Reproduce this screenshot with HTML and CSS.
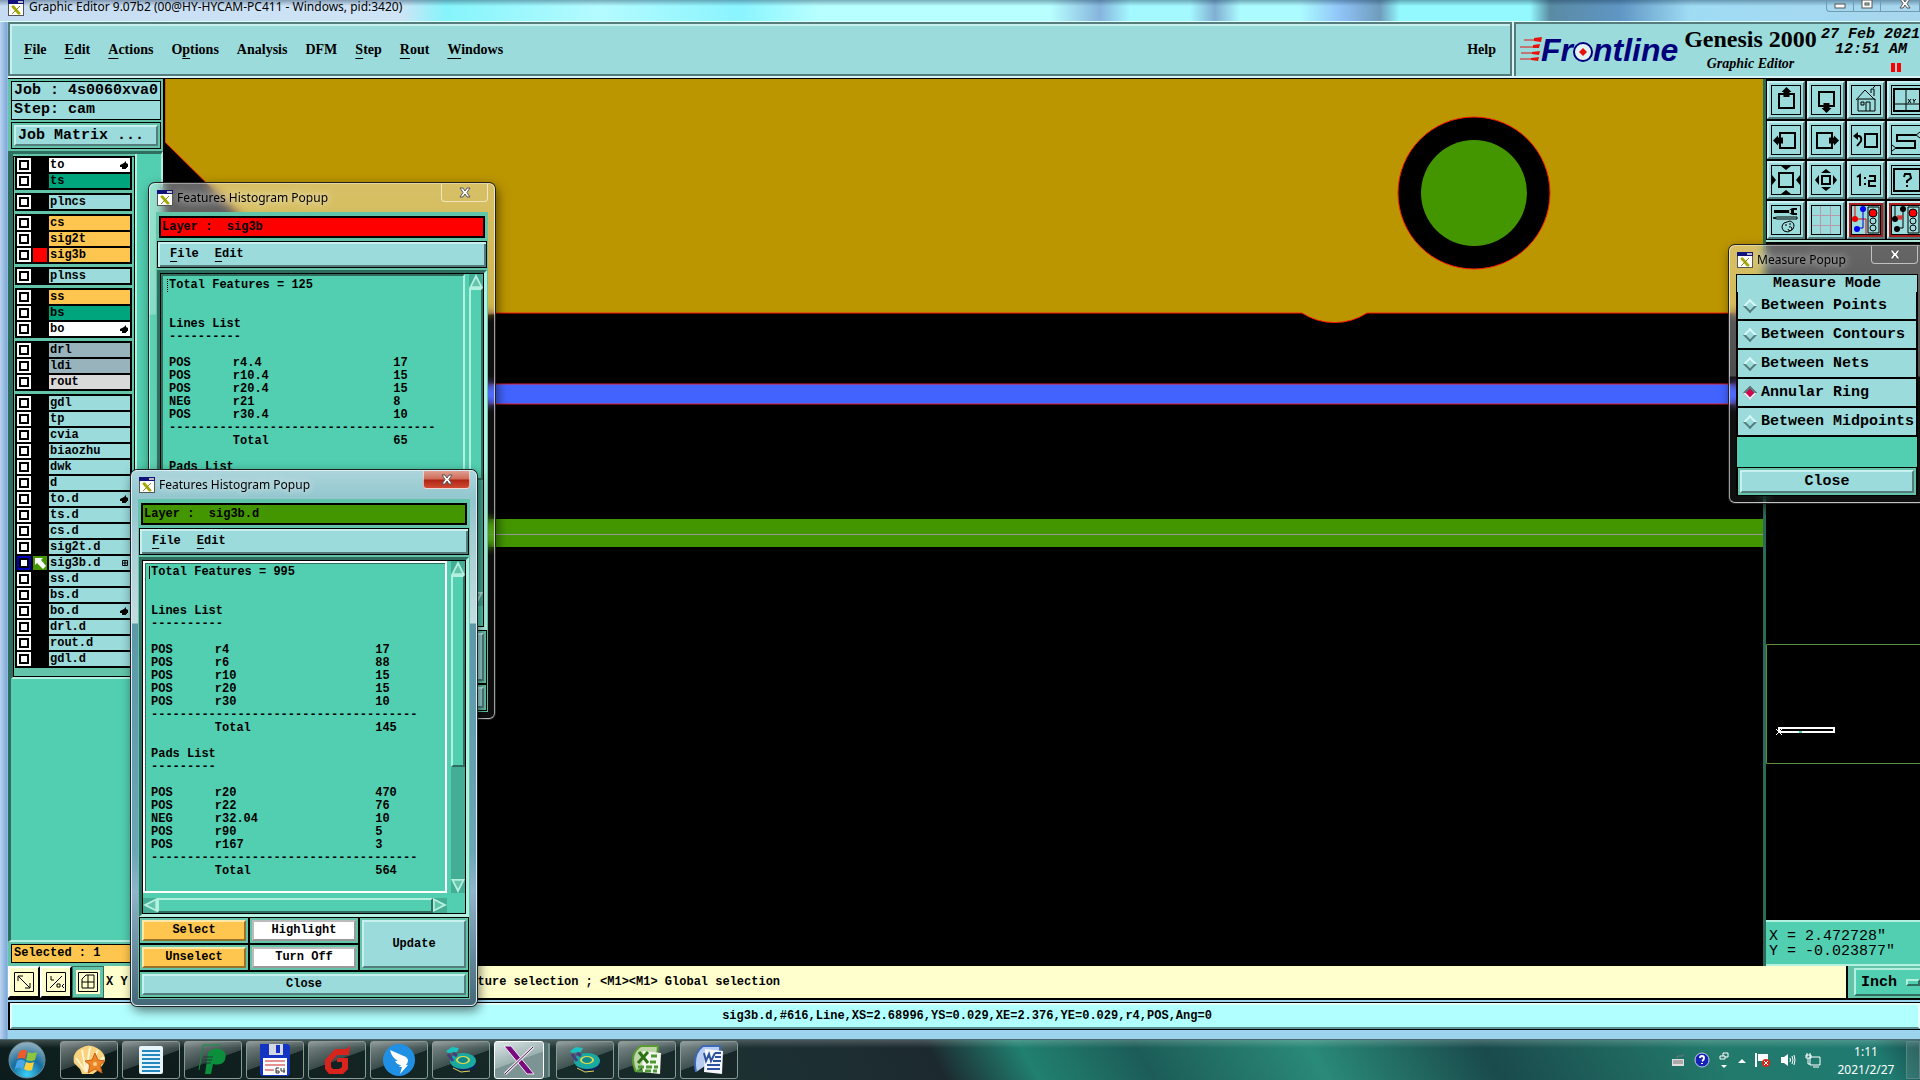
FILE: index.html
```html
<!DOCTYPE html>
<html lang="en">
<head>
  <meta charset="UTF-8" />
  <meta name="viewport" content="width=device-width, initial-scale=1.0"/>
  <title>Graphic Editor</title>
  <link rel="stylesheet" href="styles.css">
</head>
<body>
  <!-- shared icons -->
  <svg class="defs" width="0" height="0">
    <symbol id="app-icon" viewBox="0 0 16 16">
      <rect width="16" height="16" fill="#555"/><rect x="1" y="4" width="14" height="11" fill="#fff"/>
      <rect width="16" height="4" fill="#12127c"/><rect x="10" y="1" width="5" height="2" fill="#bbb"/>
      <path d="M4 6l7 8M5 6l7 8" stroke="#a5a800" stroke-width="2"/><path d="M12 6l-8 8" stroke="#8a8c10" stroke-width="1"/>
    </symbol>
    <symbol id="hand" viewBox="0 0 8 8"><path d="M0 4l4-2 2-2v2l2 1v3H7v1H6v1H2V6H0z"/></symbol>
    <symbol id="cross" viewBox="0 0 12 11">
      <path d="M1 1h3l2 3 2-3h3l-3 4.500 3 4.500h-3l-2-3-2 3h-3l3-4.500z" fill="#fff" stroke="#555" stroke-width="1"/>
    </symbol>
    <symbol id="disc" viewBox="0 0 32 32">
      <ellipse cx="19" cy="20" rx="12" ry="8" fill="#125" /><ellipse cx="18" cy="17" rx="13" ry="8" fill="#19a9a0"/>
      <ellipse cx="18" cy="16" rx="7" ry="4" fill="#e2d94a"/><ellipse cx="18" cy="16" rx="5" ry="3" fill="#0e8a8c"/>
      <path d="M1 7l6-4 7 1-2 4-9 1z" fill="#1cc2c0"/><path d="M3 10l5 7M8 9l4 3" stroke="#443f83" stroke-width="3"/>
      <path d="M8 24l8 4 9-1" stroke="#e2d94a" stroke-width="1" fill="none"/>
    </symbol>
  </svg>

  <div class="editor">
    <header class="titlebar">
      <svg class="app-icon"><use href="#app-icon"/></svg>
      <span class="title">Graphic Editor 9.07b2 (00@HY-HYCAM-PC411 - Windows, pid:3420)</span>
      <div class="win-buttons">
        <button type="button" aria-label="Minimize"><svg width="12" height="11"><rect x="1" y="4" width="10" height="4" fill="#fff" stroke="#555"/></svg></button>
        <button type="button" aria-label="Restore"><svg width="12" height="11"><rect x="1" y="0" width="10" height="8" fill="#fff" stroke="#555"/><rect x="4" y="3" width="4" height="2" fill="#9dc" stroke="#555"/></svg></button>
        <button type="button" class="wide" aria-label="Close"><svg width="12" height="11" viewBox="0 2 12 11"><use href="#cross" width="12" height="11"/></svg></button>
      </div>
    </header>

    <div class="topbar">
      <nav class="menubar">
        <button type="button"><u>F</u>ile</button>
        <button type="button"><u>E</u>dit</button>
        <button type="button"><u>A</u>ctions</button>
        <button type="button">O<u>p</u>tions</button>
        <button type="button">Analysis</button>
        <button type="button">DFM</button>
        <button type="button"><u>S</u>tep</button>
        <button type="button"><u>R</u>out</button>
        <button type="button"><u>W</u>indows</button>
        <button type="button" class="help">Help</button>
      </nav>
      <div class="brand">
        <svg class="logo" width="162" height="46" viewBox="0 -6 162 46">
          <g fill="#e8120c" stroke="#e8120c">
            <path d="M4 5h12M0 12h14M1 18h13M0 24h12" stroke-width="1"/>
            <path d="M14 3l8-1-1 5-7-1zM13 10l7-1-1 4-6 0zM12 17l8-1-1 4-7-1zM11 23l8-1-1 4-7-1z" stroke="none"/>
          </g>
          <text x="21" y="26">Fr</text>
          <text x="73" y="26">ntline</text>
          <circle cx="63" cy="17" r="9" fill="#e4f4f4" stroke="#00007c" stroke-width="2"/>
          <path d="M63 13l4 4-4 4-4-4z" fill="#e8120c"/>
        </svg>
        <div class="product">
          <h1>Genesis 2000</h1>
          <p>Graphic Editor</p>
        </div>
        <div class="clock">
          <p>27 Feb 2021</p>
          <p>12:51 AM</p>
          <span class="pause"></span>
        </div>
      </div>
    </div>

    <div class="workspace">
      <aside class="sidebar">
        <div class="job">
          <p>Job : 4s0060xva0</p>
          <p>Step: cam</p>
        </div>
        <div class="matrix"><button type="button">Job Matrix ...</button></div>
        <div class="layers">
          <div class="layer-list">
            <div class="group">
              <label class="white"><input type="checkbox"><i></i><span>to<svg><use href="#hand"/></svg></span></label>
              <label class="green"><input type="checkbox"><i></i><span>ts</span></label>
            </div>
            <div class="group">
              <label><input type="checkbox"><i></i><span>plncs</span></label>
            </div>
            <div class="group">
              <label class="orange"><input type="checkbox"><i></i><span>cs</span></label>
              <label class="orange"><input type="checkbox"><i></i><span>sig2t</span></label>
              <label class="orange"><input type="checkbox"><i class="red"></i><span>sig3b</span></label>
            </div>
            <div class="group">
              <label><input type="checkbox"><i></i><span>plnss</span></label>
            </div>
            <div class="group">
              <label class="orange"><input type="checkbox"><i></i><span>ss</span></label>
              <label class="green"><input type="checkbox"><i></i><span>bs</span></label>
              <label class="white"><input type="checkbox"><i></i><span>bo<svg><use href="#hand"/></svg></span></label>
            </div>
            <div class="group">
              <label class="slate"><input type="checkbox"><i></i><span>drl</span></label>
              <label class="slate"><input type="checkbox"><i></i><span>ldi</span></label>
              <label class="grey"><input type="checkbox"><i></i><span>rout</span></label>
            </div>
            <div class="group">
              <label><input type="checkbox"><i></i><span>gdl</span></label>
              <label><input type="checkbox"><i></i><span>tp</span></label>
              <label><input type="checkbox"><i></i><span>cvia</span></label>
              <label><input type="checkbox"><i></i><span>biaozhu</span></label>
              <label><input type="checkbox"><i></i><span>dwk</span></label>
              <label><input type="checkbox"><i></i><span>d</span></label>
              <label><input type="checkbox"><i></i><span>to.d<svg><use href="#hand"/></svg></span></label>
              <label><input type="checkbox"><i></i><span>ts.d</span></label>
              <label><input type="checkbox"><i></i><span>cs.d</span></label>
              <label><input type="checkbox"><i></i><span>sig2t.d</span></label>
              <label><input type="checkbox" checked><i class="work"><svg viewBox="0 0 14 14"><path d="M2 2h8l-2 2 5 6-3 3-6-6-2 2z" fill="#fff"/></svg></i><span>sig3b.d<svg viewBox="0 0 8 8"><path d="M2.500 1.500h5v5h-5zM2 4h6M5 1.500v5" fill="none" stroke="#000"/></svg></span></label>
              <label><input type="checkbox"><i></i><span>ss.d</span></label>
              <label><input type="checkbox"><i></i><span>bs.d</span></label>
              <label><input type="checkbox"><i></i><span>bo.d<svg><use href="#hand"/></svg></span></label>
              <label><input type="checkbox"><i></i><span>drl.d</span></label>
              <label><input type="checkbox"><i></i><span>rout.d</span></label>
              <label><input type="checkbox"><i></i><span>gdl.d</span></label>
            </div>
          </div>
        </div>
        <p class="selected">Selected : 1</p>
      </aside>

      <main class="canvas">
        <svg width="100%" height="100%" viewBox="0 0 1598 887" preserveAspectRatio="xMinYMin slice">
          <path d="M0 -2H1600V234H1202a60 60 0 0 1 -65 0H173L0 63z" fill="#bc9600" stroke="#ff1a00"/>
          <rect x="-2" y="305" width="1602" height="20" fill="#4363ff" stroke="#e0202c"/>
          <rect y="440" width="1600" height="28" fill="#439600"/>
          <path d="M0 455.500h1600" stroke="#999"/>
          <circle cx="1309" cy="114" r="76" fill="#000" stroke="#ff1a00"/>
          <circle cx="1309" cy="114" r="53" fill="#439600"/>
        </svg>
      </main>

      <aside class="tools">
        <div class="toolbox">
          <button type="button" aria-label="Pan up"><svg viewBox="0 0 30 30"><path d="M8 9h15v14H8z" class="thick"/><path d="M15.500 2l5 5h-2v5h-6V7h-2z"/></svg></button>
          <button type="button" aria-label="Pan down"><svg viewBox="0 0 30 30"><path d="M8 7h15v14H8z" class="thick"/><path d="M15.500 28l5-5h-2v-5h-6v5h-2z"/></svg></button>
          <button type="button" aria-label="Home"><svg viewBox="0 0 30 30"><path d="M5 15L14 5l10 10M7 14v12h17V14zM10 17h3v3h-3zM15 26v-9h4v9M20 8V4h3v7M22 3l2-2" class="thin"/></svg></button>
          <button type="button" aria-label="Overview"><svg viewBox="0 0 30 30"><path d="M3 4h26v22H3z" class="thick"/><path d="M15 4v22M3 19h26M17 14l3 4M20 14l-3 4M22 14l1 2 2-2M23 16v2" class="thin"/></svg></button>
          <button type="button" aria-label="Pan left"><svg viewBox="0 0 30 30"><path d="M9 8h15v15H9z" class="thick"/><path d="M2 15.500l5-5v2h5v6H7v2z"/></svg></button>
          <button type="button" aria-label="Pan right"><svg viewBox="0 0 30 30"><path d="M6 8h15v15H6z" class="thick"/><path d="M28 15.500l-5-5v2h-5v6h5v2z"/></svg></button>
          <button type="button" aria-label="Previous view"><svg viewBox="0 0 30 30"><path d="M14 9h12v13H14zM4 11h4q3 1 2 5l-4 5" class="thick"/><path d="M2 11l5-4v8z"/></svg></button>
          <button type="button" aria-label="Serpentine"><svg viewBox="0 0 30 30"><path d="M25 10H6v6h18v7H5" class="thick"/><path d="M25 10l4-3M25 10l4 3M5 23l-4-3M5 23l-4 3" class="thin"/></svg></button>
          <button type="button" aria-label="Zoom in"><svg viewBox="0 0 30 30"><path d="M8 8h14v14H8z" class="thick"/><path d="M10 1h10l-5 4zM10 29h10l-5-4zM1 10v10l4-5zM29 10v10l-4-5z"/></svg></button>
          <button type="button" aria-label="Zoom out"><svg viewBox="0 0 30 30"><path d="M11 11h8v8h-8z" class="thick"/><path d="M10 8h10l-5-4zM10 22h10l-5 4zM8 10v10l-4-5zM22 10v10l4-5z"/></svg></button>
          <button type="button" aria-label="Scale 1:2"><svg viewBox="0 0 30 30"><path d="M6 12l3-2v11M14 12v2M14 18v2M18 11h6v5h-6v5h7" class="thick"/></svg></button>
          <button type="button" aria-label="Query"><svg viewBox="0 0 30 30"><path d="M3 4h26v22H3zM13 12l1-3h5l1 4-4 3v2M16 20v2" class="thick"/></svg></button>
          <button type="button" aria-label="Setup"><svg viewBox="0 0 30 30"><path d="M3 5h17v3H3zM26 3h-4q-4 1-4 3.500t4 3.500h4V8h-3V5h3z"/><path d="M2 13l4-1h20v2H6zM13 18l6-2q6 2 3 8l-5 3-4-1q-4-4 0-8M14 20h2M18 19h2M17 24a2 2 0 1 0 1-2" class="thin"/></svg></button>
          <button type="button" aria-label="Grid"><svg viewBox="0 0 30 30"><path d="M9.500 0v30M19.500 0v30M0 10.500h30M0 20.500h30" fill="none" stroke="#b799a8"/></svg></button>
          <button type="button" class="alert" aria-label="Nets check"><svg viewBox="0 0 30 30"><path d="M4 0v14h11v16" stroke="#e00" fill="none"/><circle cx="4" cy="14" r="3" fill="#e00"/><path d="M12 4v19H6" stroke="#00c" fill="none"/><circle cx="12" cy="4" r="3" fill="#00e"/><circle cx="6" cy="24" r="3" fill="#00e"/><path d="M17 2h11v26H17z" class="thin"/><circle cx="22" cy="8" r="4" fill="#f00" stroke="#000"/><circle cx="22" cy="16" r="3" class="thin"/><circle cx="22" cy="23" r="3" class="thin"/></svg></button>
          <button type="button" class="alert" aria-label="Spacing check"><svg viewBox="0 0 30 30"><path d="M4 0v14M12 4v19H6" class="thin"/><circle cx="4" cy="14" r="3"/><circle cx="12" cy="4" r="3"/><circle cx="6" cy="24" r="3"/><path d="M7 10v4h4v-4M9 10v4M7 12h4" stroke="#e00" fill="none"/><path d="M17 2h11v26H17z" class="thin"/><circle cx="22" cy="8" r="4" fill="#f00" stroke="#000"/><circle cx="22" cy="16" r="3" class="thin"/><circle cx="22" cy="23" r="3" class="thin"/></svg></button>
        </div>
        <div class="overview">
          <svg width="154" height="120" viewBox="0 0 154 120">
            <path d="M160 .5H.5v119H160" fill="none" stroke="#5c8f3c"/>
            <path d="M13 84h55v4H13z" fill="none" stroke="#fff" stroke-width="2"/>
            <path d="M10 85l6 6M16 85l-6 6" stroke="#fff"/><rect x="33" y="87" width="3" height="2" fill="#52cfb0"/>
          </svg>
        </div>
        <div class="coords">
          <p>X = 2.472728"</p>
          <p>Y = -0.023877"</p>
        </div>
      </aside>
    </div>

    <div class="command">
      <button type="button" class="mode" aria-label="Snap off"><svg viewBox="0 0 20 20"><path d="M.5 .5h19v19H.5zM4 4l12 12M4 9V4h5M16 11v5h-5" class="thin"/></svg></button>
      <button type="button" class="mode" aria-label="Angle"><svg viewBox="0 0 20 20"><path d="M.5 .5h19v19H.5zM4 16L16 4M5 4v4h3M11 12h3v3h-3zM18 12l-2 2 2 2" class="thin"/></svg></button>
      <button type="button" class="mode on" aria-label="Grid snap"><svg viewBox="0 0 20 20"><path d="M.5 .5h19v19H.5zM8 3h8v13H4V7zM10 3v13M4 10h12" class="thin"/></svg></button>
      <div class="prompt"><span class="xy">X Y</span><span>Feature selection ; &lt;M1&gt;&lt;M1&gt; Global selection</span></div>
      <div class="units"><button type="button">Inch <i></i></button></div>
    </div>
    <div class="status"><p>sig3b.d,#616,Line,XS=2.68996,YS=0.029,XE=2.376,YE=0.029,r4,POS,Ang=0</p></div>
  </div>

  <section class="popup histogram first">
    <header>
      <svg class="app-icon"><use href="#app-icon"/></svg><h2>Features Histogram Popup</h2>
      <button type="button" class="close" aria-label="Close"><svg width="12" height="11"><use href="#cross"/></svg></button>
    </header>
    <div class="body">
      <p class="layer red">Layer :&nbsp; sig3b</p>
      <nav class="submenu"><button type="button"><u>F</u>ile</button><button type="button"><u>E</u>dit</button></nav>
      <div class="pane">
        <div class="report">
          <p class="caret">Total Features = 125</p>
          <h3>Lines List</h3>
          <p>----------</p>
          <table>
            <tr><td>POS</td><td>r4.4</td><td>17</td></tr>
            <tr><td>POS</td><td>r10.4</td><td>15</td></tr>
            <tr><td>POS</td><td>r20.4</td><td>15</td></tr>
            <tr><td>NEG</td><td>r21</td><td>8</td></tr>
            <tr><td>POS</td><td>r30.4</td><td>10</td></tr>
            <tr><td colspan="3">-------------------------------------</td></tr>
            <tr><td></td><td>Total</td><td>65</td></tr>
          </table>
          <h4>Pads List</h4>
        </div>
        <div class="vscroll"><i class="up"></i><span></span><i class="down"></i></div>
        <div class="hscroll"><i class="left"></i><span></span><i class="right"></i></div>
      </div>
      <div class="actions">
        <div><button type="button" class="orange" aria-label="Select"></button></div>
        <div><button type="button" class="white" aria-label="Highlight"></button></div>
        <div class="tall"><button type="button" aria-label="Update"></button></div>
        <div><button type="button" class="orange" aria-label="Unselect"></button></div>
        <div><button type="button" class="white" aria-label="Turn Off"></button></div>
        <div class="full"><button type="button" aria-label="Close"></button></div>
      </div>
    </div>
  </section>

  <section class="popup histogram active">
    <header>
      <svg class="app-icon"><use href="#app-icon"/></svg><h2>Features Histogram Popup</h2>
      <button type="button" class="close" aria-label="Close"><svg width="12" height="11"><use href="#cross"/></svg></button>
    </header>
    <div class="body">
      <p class="layer">Layer :&nbsp; sig3b.d</p>
      <nav class="submenu"><button type="button"><u>F</u>ile</button><button type="button"><u>E</u>dit</button></nav>
      <div class="pane">
        <div class="report">
          <p class="caret">Total Features = 995</p>
          <h3>Lines List</h3>
          <p>----------</p>
          <table>
            <tr><td>POS</td><td>r4</td><td>17</td></tr>
            <tr><td>POS</td><td>r6</td><td>88</td></tr>
            <tr><td>POS</td><td>r10</td><td>15</td></tr>
            <tr><td>POS</td><td>r20</td><td>15</td></tr>
            <tr><td>POS</td><td>r30</td><td>10</td></tr>
            <tr><td colspan="3">-------------------------------------</td></tr>
            <tr><td></td><td>Total</td><td>145</td></tr>
          </table>
          <h4>Pads List</h4>
          <p>---------</p>
          <table>
            <tr><td>POS</td><td>r20</td><td>470</td></tr>
            <tr><td>POS</td><td>r22</td><td>76</td></tr>
            <tr><td>NEG</td><td>r32.04</td><td>10</td></tr>
            <tr><td>POS</td><td>r90</td><td>5</td></tr>
            <tr><td>POS</td><td>r167</td><td>3</td></tr>
            <tr><td colspan="3">-------------------------------------</td></tr>
            <tr><td></td><td>Total</td><td>564</td></tr>
          </table>
        </div>
        <div class="vscroll"><i class="up"></i><span></span><i class="down"></i></div>
        <div class="hscroll"><i class="left"></i><span></span><i class="right"></i></div>
      </div>
      <div class="actions">
        <div><button type="button" class="orange">Select</button></div>
        <div><button type="button" class="white">Highlight</button></div>
        <div class="tall"><button type="button">Update</button></div>
        <div><button type="button" class="orange">Unselect</button></div>
        <div><button type="button" class="white">Turn Off</button></div>
        <div class="full"><button type="button">Close</button></div>
      </div>
    </div>
  </section>

  <section class="popup measure">
    <header>
      <svg class="app-icon"><use href="#app-icon"/></svg><h2>Measure Popup</h2>
      <button type="button" class="close" aria-label="Close"><svg width="12" height="11"><use href="#cross"/></svg></button>
    </header>
    <div class="body">
      <h3>Measure Mode</h3>
      <div class="modes">
        <label><input type="radio" name="mode">Between Points</label>
        <label><input type="radio" name="mode">Between Contours</label>
        <label><input type="radio" name="mode">Between Nets</label>
        <label><input type="radio" name="mode" checked>Annular Ring</label>
        <label><input type="radio" name="mode">Between Midpoints</label>
      </div>
      <div class="close-row"><button type="button">Close</button></div>
    </div>
  </section>

  <footer class="taskbar">
    <button type="button" class="start" aria-label="Start">
      <svg viewBox="0 0 38 38">
        <defs><radialGradient id="orb" cx=".5" cy=".9" r=".9"><stop offset="0" stop-color="#3ad0f5"/><stop offset=".5" stop-color="#176d9f"/><stop offset="1" stop-color="#9ab4c0"/></radialGradient></defs>
        <circle cx="19" cy="19" r="18" fill="url(#orb)" stroke="#6c8b98"/>
        <path d="M11 11q4-4 8-1l-2 8q-4-2-8 0z" fill="#ec5b29"/><path d="M20 11q4 2 9 0l-2 8q-4 2-9 0z" fill="#8cc63c"/>
        <path d="M9 20q4-3 8 0l-2 8q-4-3-8 0z" fill="#4aa8ea"/><path d="M18 21q4 2 8 0l-2 8q-4 2-8-1z" fill="#fbd03b"/>
      </svg>
    </button>
    <button type="button" class="task" aria-label="Shell"><svg viewBox="0 0 32 32"><path d="M14 30h-5l-2-5-6-6Q-1 8 8 4q8-5 16 0 9 5 8 13-4 8-12 13z" fill="#f8d27c"/><path d="M13 28L3 14M13 28L9 6M13 28L17 3M14 28L25 6M15 28L31 13" stroke="#fff3cf" stroke-width="2"/><path d="M22 9l3 7 7 1-5 4 2 8-7-4-7 4 2-8-5-4 7-1z" fill="#ee8428" stroke="#c65f14"/><circle cx="22" cy="20" r="2" fill="#ffd08a"/></svg></button>
    <button type="button" class="task" aria-label="Notes"><svg viewBox="0 0 32 32"><rect x="4" y="2" width="24" height="28" rx="2" fill="#e6f5fc"/><path d="M7 7h18M7 11h18M7 15h18M7 19h18M7 23h18M7 27h18" stroke="#2587c0" stroke-width="2"/></svg></button>
    <button type="button" class="task" aria-label="P"><svg viewBox="0 0 32 32"><path d="M8 30l3-21q4-6 12-4 8 3 5 11-3 6-12 4l-2 10z" fill="#0c8f3c"/><path d="M2 26L6 1h18" fill="none" stroke="#0c8f3c"/><path d="M6 13h10M5 16h10M5 19h9" stroke="#263a38"/></svg></button>
    <button type="button" class="task" aria-label="Disk"><svg viewBox="0 0 32 32"><path d="M1 0h28l2 2v28l-2 2H3l-2-2z" fill="#1434c4"/><rect x="10" width="14" height="11" fill="#d4d8e4"/><rect x="17" y="1" width="4" height="8" fill="#1434c4"/><rect x="4" y="14" width="24" height="17" fill="#fff"/><path d="M6 17h20M6 21h20M6 26h9" stroke="#c22"/><path d="M20 24h-3v5h3v-2h-3M22 24v3h4M25 24v5" fill="none" stroke="#333"/></svg></button>
    <button type="button" class="task" aria-label="Genesis"><svg viewBox="0 0 32 32"><path d="M29 2l-4 3H14L4 16v9l4 5h14l5-5V14H16v4h5v5l-3 2h-6l-2-2v-5l6-7h12z" fill="#d8241c"/></svg></button>
    <button type="button" class="task" aria-label="Wing"><svg viewBox="0 0 32 32"><circle cx="16" cy="16" r="16" fill="#2090e4"/><path d="M7 6l16 7q4 3 0 8l2 0-8 9 2-7h-3l2-2q-4 0-6-4h3q-6-3-8-11z" fill="#fff"/></svg></button>
    <button type="button" class="task" aria-label="Disc"><svg><use href="#disc"/></svg></button>
    <button type="button" class="task current" aria-label="X server"><svg viewBox="0 0 32 32"><path d="M1 2h7l23 28h-7z" fill="#7a0a80" stroke="#eee"/><path d="M30 3L2 30" stroke="#eee" stroke-width="3"/><path d="M30 3L2 30" stroke="#511257" stroke-width="1"/></svg></button>
    <button type="button" class="task" aria-label="Disc 2"><svg><use href="#disc"/></svg></button>
    <button type="button" class="task" aria-label="Excel"><svg viewBox="0 0 32 32"><path d="M5 28Q-3 10 10 2h17l-1 10" fill="#bcd6a8" stroke="#5b9a32" stroke-width="2"/><path d="M12 7l18 2-1 21-18-2z" fill="#f4f8ee"/><path d="M8 8l9 11M17 8L7 19" stroke="#2e7215" stroke-width="3"/><path d="M20 12h7M19 18h8M7 23h20M6 27h20" stroke="#4c9a34" stroke-width="3" stroke-dasharray="6 2"/></svg></button>
    <button type="button" class="task" aria-label="Word"><svg viewBox="0 0 32 32"><path d="M3 28Q-1 10 10 2h17v10" fill="#b8cdf0" stroke="#3d68b4" stroke-width="2"/><path d="M12 5l18 2-1 23-18-2z" fill="#f4f7fd"/><path d="M11 9l2 8 3-7 2 7 4-8M22 9h6M22 13h6M20 17h8M14 21h13M14 25h13" fill="none" stroke="#2c52a0" stroke-width="2"/></svg></button>
    <div class="tray">
      <svg width="14" height="14"><path d="M1 6h12v7H1z" fill="#ddd"/><path d="M2 8h10M2 10h10M6 5q0-3 3-2t4-2" stroke="#777" fill="none"/></svg>
      <svg width="16" height="16"><circle cx="8" cy="8" r="7" fill="#1422b8" stroke="#c4cce8"/><path d="M6 6q0-2 2-2t2 2-2 3M8 11v1" stroke="#fff" stroke-width="2" fill="none"/></svg>
      <svg width="10" height="18"><path d="M1 5h5v3H1zM4 5V2h5v4H6" stroke="#fff" fill="none"/><path d="M2 14h6l-3 3z" fill="#fff"/></svg>
      <svg width="8" height="5"><path d="M0 5l4-4 4 4z" fill="#fff"/></svg>
      <svg width="16" height="16"><path d="M1 1v14" stroke="#fff" stroke-width="2"/><path d="M3 2h10v7H3z" fill="#fff"/><circle cx="11" cy="11" r="4" fill="#d8281c"/><path d="M9 9l4 4M13 9l-4 4" stroke="#fff"/></svg>
      <svg width="16" height="14"><path d="M1 4h3l4-3v12l-4-3H1z" fill="#fff"/><path d="M10 5q1 2 0 4M12 3q2 4 0 8M14 2q2 5 0 10" stroke="#fff" fill="none"/></svg>
      <svg width="16" height="16"><path d="M5 5h10v8H5zM8 15h6M2 1v4M5 1v4M1 3h5v3H1zM3 6v6h2" stroke="#fff" fill="none"/></svg>
      <div class="time"><p>1:11</p><p>2021/2/27</p></div>
      <button type="button" class="desktop" aria-label="Show desktop"></button>
    </div>
  </footer>
</body>
</html>
```
FILE: styles.css
```css
:root {
  --aqua: #9bdbdb;
  --teal: #52cfb0;
  --trim: #62c4a8;
  --dark: #2f6e5e;
  --light: #b4f0e0;
  --orange: #fec64e;
  --yellow: #ffffcd;
}

* {
  box-sizing: border-box;
}

body,
p,
h1,
h2,
h3,
h4 {
  margin: 0;
}

body {
  display: flex;
  flex-direction: column;
  height: 100vh;
  overflow: hidden;
  background: #000;
  color: #000;
  font: bold 12px/13px "Liberation Mono", monospace;
}

button {
  font: inherit;
  color: inherit;
  padding: 0;
  border: 0;
  background: none;
}

svg {
  display: block;
  flex: none;
}

u {
  text-underline-offset: 4px;
}

.defs {
  position: absolute;
}

.thin {
  fill: none;
  stroke: #000;
}

.thick {
  fill: none;
  stroke: #000;
  stroke-width: 2;
}

.app-icon {
  width: 16px;
  height: 16px;
}

/* Main window */
.editor {
  flex: 1;
  min-height: 0;
  display: flex;
  flex-direction: column;
  padding: 0 0 9px 8px;
  background: linear-gradient(to right, #b9d3ee, #7fa8d8 7px, #9cd4ee 8px);
}

.titlebar {
  display: flex;
  align-items: flex-start;
  gap: 5px;
  height: 22px;
  margin-left: -8px;
  padding-left: 8px;
  border-bottom: 1px solid #dff;
  background: linear-gradient(rgba(20, 50, 80, .4), transparent 6px), linear-gradient(to right, #c6dcf2, #cfe4f6 400px, #86f4fb 445px, #b4fbff 600px, #8af4ff 740px, #b8ffff 820px, #b8ffff 1050px, #86b4dc 1100px, #a4f8ff 1130px, #a4f8ff 1190px, #80aed2 1215px, #acfbff 1240px, #acfbff 1300px, #90c4f8 1340px, #6f9cbc 1380px, #93f9ff 1400px, #93f9ff 1530px, #5a8ba4 1550px, #5f96c4 1620px, #9fdcf4 1690px, #a8d6ee);
  font: 12px/14px "Noto Sans", sans-serif;
}

.win-buttons {
  display: flex;
  margin-left: auto;
  height: 12px;
  border: 1px solid #6f9cae;
  border-top: 0;
  border-right: 0;
  border-radius: 0 0 0 4px;
}

.win-buttons button {
  width: 27px;
  display: flex;
  justify-content: center;
  border-right: 1px solid #6f9cae;
}

.win-buttons .wide {
  width: 39px;
  padding-left: 9px;
}

.topbar {
  display: flex;
  height: 57px;
  background: #d8f4f4;
  border-bottom: 1px solid #000;
}

.menubar,
.brand {
  display: flex;
  background: var(--aqua);
  border: 2px solid #547c7c;
}

.menubar {
  flex: 1;
  align-items: center;
  gap: 18px;
  padding: 2px 14px 0 14px;
  box-shadow: inset 2px 2px #c8f0f0;
  margin: 0 2px 2px 0;
  font: bold 14px/16px "Liberation Serif", serif;
}

.menubar .help {
  margin-left: auto;
}

.brand {
  width: 406px;
  padding-left: 4px;
  margin-bottom: 2px;
  border-right: 0;
  border-bottom: 0;
  overflow: hidden;
}

.logo {
  margin: 5px 2px 0 0;
}

.logo text {
  font: italic bold 32px "Liberation Sans", sans-serif;
  fill: #00007c;
}

.product {
  width: 136px;
  padding-top: 1px;
  text-align: center;
  white-space: nowrap;
}

.product h1 {
  font: bold 24px/28px "Liberation Serif", serif;
}

.product p {
  font: italic bold 14px/22px "Liberation Serif", serif;
}

.clock {
  margin-left: 4px;
  font: italic 15px/15px "Liberation Mono", monospace;
  padding-top: 3px;
  white-space: nowrap;
}

.clock p {
  font-weight: bold;
}

.clock p:nth-child(2) {
  padding-left: 14px;
}

.pause {
  display: block;
  width: 10px;
  height: 9px;
  margin: 6px 0 0 70px;
  border: solid #f00;
  border-width: 0 4px;
}

.workspace {
  flex: 1;
  min-height: 0;
  display: flex;
  background: #000;
}

/* Left column */
.sidebar {
  width: 155px;
  display: flex;
  flex-direction: column;
  background: var(--trim);
}

.job {
  margin: 2px 2px 0 3px;
  border: 1px solid #000;
  background: #000;
  display: grid;
  gap: 1px;
}

.job p {
  padding: 0 2px;
  background: var(--aqua);
  font-size: 15px;
  line-height: 18px;
  white-space: nowrap;
}

.matrix {
  margin: 2px 2px 0 3px;
  padding: 2px;
  border: 1px solid #000;
}

.matrix button {
  width: 100%;
  padding-left: 2px;
  text-align: left;
  font-size: 15px;
  line-height: 17px;
}

.matrix button,
.actions button,
.close-row button {
  background: var(--aqua);
  border: 2px solid;
  border-color: #c8f0f0 #547c7c #547c7c #c8f0f0;
}

.layers {
  flex: 1;
  margin-top: 2px;
  border: 3px solid;
  border-color: var(--dark) var(--light) var(--light) var(--dark);
  border-right-width: 2px;
  border-bottom-width: 2px;
  background: var(--teal);
}

.layer-list {
  width: 126px;
  border: 2px solid;
  border-color: var(--trim) var(--light) var(--light) var(--dark);
  border-top: 0;
  padding: 2px 3px 9px 1px;
  background: var(--trim);
  outline: 1px solid #000;
  outline-offset: -3px;
  display: grid;
  gap: 3px;
}

.group {
  padding: 1px;
  margin: 0 0 0 1px;
  background: #000;
}

.group label {
  display: flex;
  height: 16px;
  padding: 1px;
}

.group input {
  appearance: none;
  width: 14px;
  height: 14px;
  margin: 0;
  background: #fff;
  border: 2px solid #fff;
  outline: 2px solid #000;
  outline-offset: -4px;
}

.group input:checked {
  border-color: #0000b8;
}

.group i {
  width: 14px;
  height: 14px;
  margin: 0 2px;
}

.group i.red {
  background: #f00;
}

.group i.work {
  background: #439600;
}

.group label > span {
  flex: 1;
  display: flex;
  align-items: center;
  justify-content: space-between;
  padding: 0 2px 0 1px;
  background: var(--aqua);
}

.group span svg {
  width: 8px;
  height: 8px;
}

.group .white span {
  background: #fff;
}

.group .green span {
  background: #00a57e;
}

.group .orange span {
  background: var(--orange);
}

.group .slate span {
  background: #99b3bd;
}

.group .grey span {
  background: #d9d9d9;
}

.selected {
  margin: 2px 2px 3px 3px;
  padding: 0 2px;
  border: 1px solid #000;
  background: var(--orange);
  line-height: 17px;
}

.canvas {
  flex: 1;
  min-width: 0;
  margin-left: 2px;
  background: #000;
}

/* Right column */
.tools {
  width: 157px;
  overflow: hidden;
  display: flex;
  flex-direction: column;
  border-left: 3px solid #2c6a58;
}

.toolbox {
  display: grid;
  grid-template-columns: repeat(4, 38px);
  grid-auto-rows: 38px;
  gap: 2px;
  padding: 2px 0 1px 1px;
}

.toolbox button {
  padding: 2px;
  background: var(--aqua);
  border: 2px solid;
  border-color: #c8f0f0 #547c7c #547c7c #c8f0f0;
}

.toolbox svg {
  width: 30px;
  height: 30px;
  outline: 1px solid #000;
  outline-offset: -1px;
}

.toolbox .alert {
  padding: 0;
  background: #a82020;
}

.toolbox .alert svg {
  margin: 2px;
  background: var(--aqua);
}

.overview {
  flex: 1;
  display: flex;
  padding-top: 402px;
  border-top: 2px solid var(--light);
}

.coords {
  height: 46px;
  padding: 7px 3px 0;
  border-top: 2px solid var(--light);
  border-bottom: 2px solid var(--light);
  background: var(--teal);
  font: 15px/15px "Liberation Mono", monospace;
  white-space: nowrap;
}

/* Bottom rows */
.command {
  display: flex;
  height: 34px;
  border-bottom: 2px solid #000;
  background: var(--trim);
}

.mode {
  width: 32px;
  padding: 3px 4px;
  border: 2px solid;
  border-color: #fff #000 #000 #fff;
  background: var(--yellow);
}

.mode.on {
  border-color: #2f6e5e;
  outline: 3px solid var(--trim);
  outline-offset: -4px;
}

.mode svg {
  width: 20px;
  height: 20px;
}

.prompt {
  flex: 1;
  display: flex;
  align-items: center;
  padding-left: 2px;
  background: var(--yellow);
  border-right: 2px solid #000;
}

.prompt .xy {
  width: 350px;
}

.units {
  width: 72px;
  padding: 2px 0 2px 6px;
}

.units button {
  width: 80px;
  height: 28px;
  padding-left: 5px;
  text-align: left;
  font-size: 15px;
  border: 2px solid;
  border-color: var(--light) var(--dark) var(--dark) var(--light);
  background: var(--teal);
}

.units i {
  display: inline-block;
  width: 14px;
  height: 7px;
  border: 2px solid;
  border-color: var(--light) var(--dark) var(--dark) var(--light);
}

.status {
  margin-top: 2px;
  border: solid #000;
  border-width: 1px 0 1px 2px;
  background: #b2ffff;
}

.status p {
  padding-left: 4px;
  line-height: 22px;
  text-align: center;
  border: 2px solid #e4ffff;
  border-bottom-color: #5c9090;
}

/* Popups */
.popup {
  position: absolute;
  display: flex;
  flex-direction: column;
  padding: 0 6px 6px;
  border: 1px solid rgba(255, 255, 255, .6);
  border-radius: 6px;
  box-shadow: 0 0 0 1px #222, 2px 4px 12px rgba(0, 0, 0, .6);
  background: linear-gradient(rgba(255, 255, 255, .4), rgba(255, 255, 255, .3) 130px, rgba(255, 255, 255, .06) 131px);
  backdrop-filter: blur(5px);
}

.popup header {
  display: flex;
  height: 28px;
  padding-left: 1px;
}

.popup header .app-icon {
  margin-top: 6px;
}

.popup h2 {
  margin: 6px 0 0 4px;
  font: 12px/16px "Noto Sans", sans-serif;
  text-shadow: 0 0 8px rgba(255, 255, 255, .7), 0 0 8px rgba(255, 255, 255, .5);
}

.popup .close {
  display: flex;
  align-items: center;
  justify-content: center;
  width: 47px;
  height: 18px;
  margin-left: auto;
  border: 1px solid rgba(255, 255, 255, .6);
  border-top: 0;
  border-radius: 0 0 4px 4px;
}

.histogram {
  width: 346px;
}

.histogram .body {
  padding: 1px;
  background: var(--trim);
}

.first {
  left: 149px;
  top: 183px;
}

.active {
  left: 131px;
  top: 470px;
  background: linear-gradient(rgba(255, 255, 255, .35), rgba(255, 255, 255, 0) 30px), linear-gradient(#80bfc8, #a3ccd4 60px, #c2dde0 152px, #5c98a8 153px, #6ba5b8 380px, #8fb4cc 420px, #456878);
  border-color: #d8eef4;
}

.active .close {
  background: linear-gradient(#e0a090, #cf6a58 8px, #b02414 9px, #d04a34);
}

.layer {
  margin: 3px 2px;
  padding-left: 1px;
  border: 2px solid #000;
  background: #439600;
  line-height: 18px;
}

.layer.red {
  background: #f00;
}

.submenu {
  display: flex;
  gap: 16px;
  height: 27px;
  padding-left: 12px;
  align-items: center;
  border: 1px solid #000;
  box-shadow: inset 2px 2px #c8f0f0, inset -2px -2px #547c7c;
  background: var(--aqua);
}

.pane {
  display: grid;
  grid-template-columns: 304px 14px;
  grid-template-rows: 332px 15px;
  gap: 5px 4px;
  margin-top: 2px;
  border: 3px solid;
  border-color: var(--dark) var(--light) var(--light) var(--dark);
  outline: 1px solid #000;
  outline-offset: -4px;
  padding: 1px;
  background: var(--teal);
}

.report {
  padding: 3px 6px 0;
  border: 2px solid;
  border-color: var(--dark) var(--light) var(--light) var(--dark);
}

.active .report {
  border-color: #fff;
  box-shadow: inset 1px 1px var(--dark);
}

.caret::before {
  content: "";
  position: absolute;
  width: 1px;
  height: 13px;
  margin-left: -2px;
  background: #000;
}

.first .caret::before {
  background: repeating-linear-gradient(#000 0 1px, transparent 1px 2px);
}

.report h3,
.report h4 {
  font-size: 12px;
}

.report h3 {
  margin-top: 26px;
}

.report h4 {
  margin-top: 13px;
}

.report table {
  margin-top: 13px;
  border-spacing: 0;
  table-layout: fixed;
}

.report td {
  padding: 0;
  height: 13px;
  width: 64px;
}

.report td:nth-child(2) {
  width: 161px;
}

.vscroll,
.hscroll {
  display: flex;
  background: #43ad95;
}

.vscroll {
  flex-direction: column;
}

.vscroll span {
  height: 192px;
}

.vscroll span,
.hscroll span {
  border: 2px solid;
  border-color: var(--light) var(--dark) var(--dark) var(--light);
  background: var(--teal);
}

.hscroll span {
  flex: 1;
}

.vscroll i,
.hscroll i {
  width: 14px;
  height: 14px;
  background: var(--light);
  clip-path: polygon(50% 0, 100% 100%, 0 100%);
}

.vscroll i::after,
.hscroll i::after {
  content: "";
  display: block;
  width: 14px;
  height: 14px;
  background: var(--trim);
  clip-path: polygon(50% 30%, 80% 88%, 20% 88%);
}

.vscroll .down {
  margin-top: auto;
  transform: rotate(180deg);
}

.hscroll .left {
  transform: rotate(-90deg);
}

.hscroll .right {
  transform: rotate(90deg);
}

.actions {
  display: grid;
  grid-template-columns: 108px 108px 1fr;
  grid-auto-rows: 25px;
  gap: 2px;
  padding: 1px;
  background: #000;
}

.actions > div {
  display: flex;
  padding: 2px;
  background: var(--trim);
}

.actions button {
  flex: 1;
}

.actions .tall {
  grid-row: span 2;
}

.actions .full {
  grid-column: span 3;
}

.actions .orange {
  background: var(--orange);
  border-color: #ffe8a8 #94722c #94722c #ffe8a8;
}

.actions .white {
  background: #fff;
  border-color: #bbb #999 #999 #bbb;
}

.measure {
  left: calc(100% - 191px);
  top: 245px;
  width: 196px;
}

.measure .body {
  background: var(--teal);
  border: 1px solid #000;
  border-bottom: 0;
  font-size: 15px;
}

.measure h3 {
  background: var(--aqua);
  text-align: center;
  font-size: 15px;
  line-height: 17px;
}

.modes {
  display: grid;
  gap: 2px;
  padding: 0 1px 2px;
  background: #000;
}

.modes label {
  display: flex;
  align-items: center;
  gap: 5px;
  height: 27px;
  padding-left: 6px;
  background: var(--aqua);
  white-space: nowrap;
}

.modes input {
  appearance: none;
  width: 10px;
  height: 10px;
  margin: 0 1px;
  border: 2px solid;
  border-color: #d8f8f8 #547c7c #547c7c #d8f8f8;
  transform: rotate(45deg);
}

.modes input:checked {
  background: #d4004c;
  border-color: #547c7c #d8f8f8 #d8f8f8 #547c7c;
}

.close-row {
  margin-top: 30px;
  padding: 2px;
  border: 1px solid #000;
  background: var(--trim);
}

.close-row button {
  width: 100%;
  height: 23px;
}

/* Taskbar */
.taskbar {
  display: flex;
  align-items: stretch;
  gap: 4px;
  height: 41px;
  padding: 1px 0 1px 8px;
  border-top: 1px solid #4a6a70;
  background: linear-gradient(rgba(255, 255, 255, .2), transparent 8px), linear-gradient(60deg, #0c1c1c, #1d3634 500px, #1c2a30 820px, #218070 900px, #1c5c58 1000px, #2a8a78 1150px, #1a4a4c 1300px, #227a6c 1500px, #1f7a70 1640px, #10262a 1720px, #1c4c50);
}

.start {
  width: 38px;
  margin-right: 10px;
}

.start svg {
  width: 38px;
  height: 38px;
}

.task {
  display: flex;
  align-items: center;
  justify-content: center;
  width: 58px;
  border: 1px solid #8a9896;
  border-radius: 3px;
  background: linear-gradient(160deg, rgba(255, 255, 255, .45), rgba(255, 255, 255, .15) 50%, rgba(0, 0, 0, .2) 51%);
}

.task svg {
  width: 32px;
  height: 32px;
}

.task.current {
  width: 50px;
  margin-right: 8px;
  border-color: #fff;
  background: linear-gradient(160deg, #dde8e8, #9bb0b0 50%, #7d9494 51%);
  box-shadow: 5px 0 0 -1px #53706e, 8px 0 0 -2px #7a908e;
}

.tray {
  display: flex;
  align-items: center;
  gap: 9px;
  margin-left: auto;
  color: #fff;
}

.time {
  width: 80px;
  margin: 1px -9px 0 -4px;
  text-align: center;
  font: 12px/18px "Noto Sans", sans-serif;
}

.desktop {
  align-self: stretch;
  width: 14px;
  border: 1px solid #5c8488;
  background: rgba(255, 255, 255, .1);
}
```
